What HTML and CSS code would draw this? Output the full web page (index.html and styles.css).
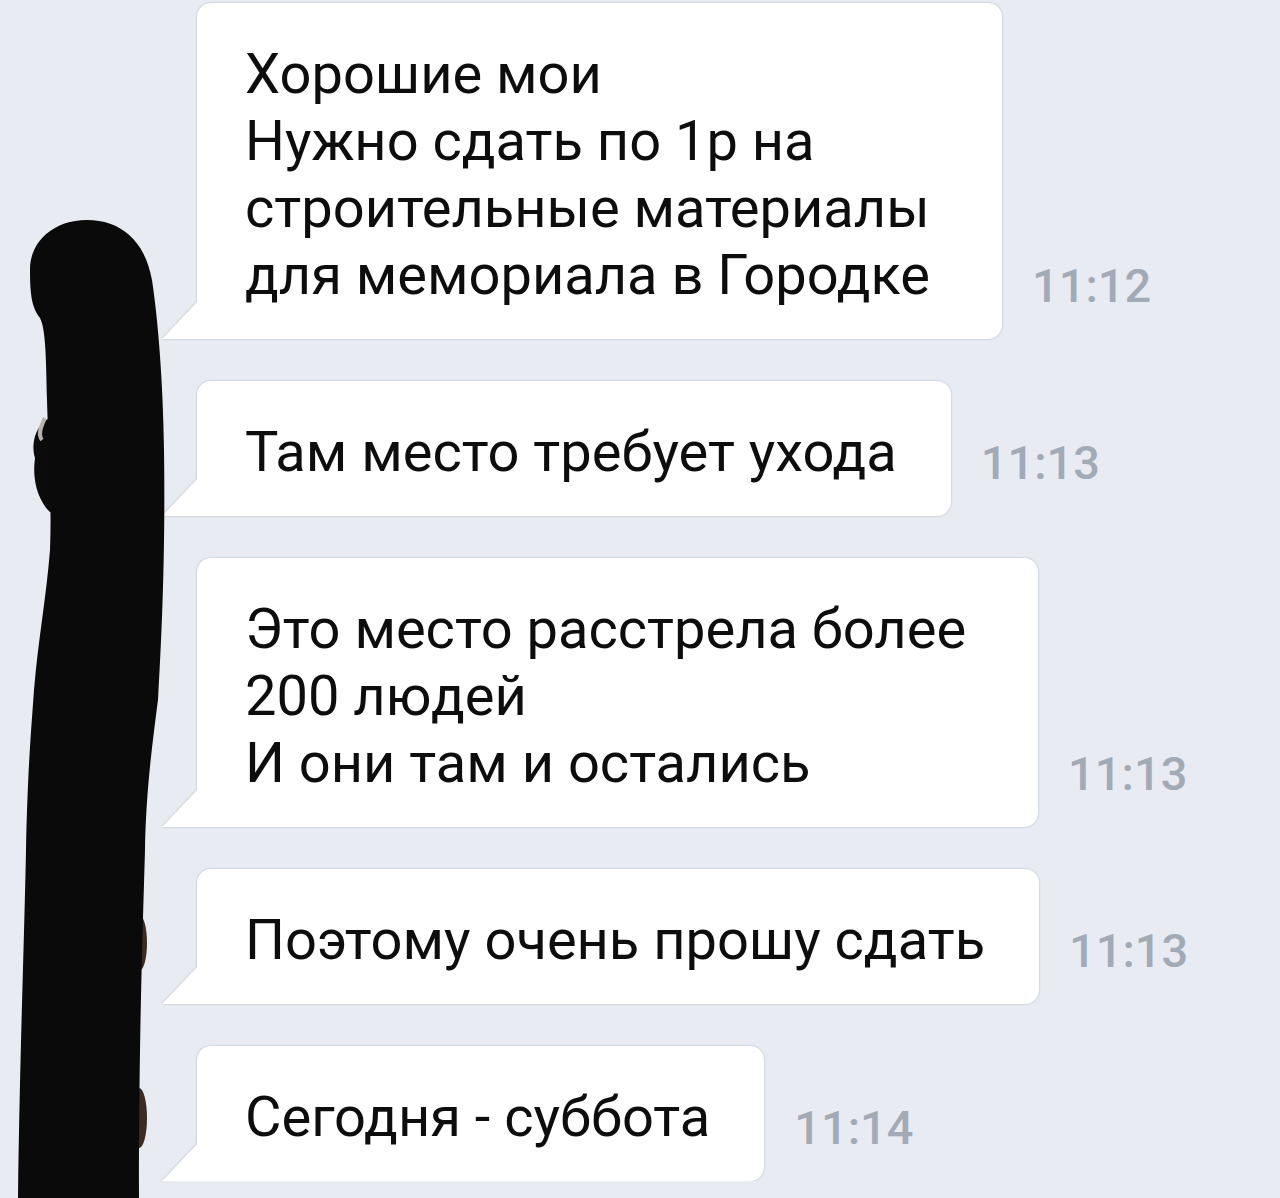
FILE: index.html
```html
<!DOCTYPE html>
<html lang="ru">
<head>
  <meta charset="UTF-8" />
  <title>Чат</title>
  <link rel="stylesheet" href="styles.css">
</head>
<body>
  <div class="chat">
    <div class="msg">
      <div class="bubble wide">Хорошие мои<br>Нужно сдать по 1р на<br>строительные материалы<br>для мемориала в Городке</div>
      <span class="time">11:12</span>
    </div>
    <div class="msg">
      <div class="bubble">Там место требует ухода</div>
      <span class="time">11:13</span>
    </div>
    <div class="msg">
      <div class="bubble wide">Это место расстрела более<br>200 людей<br>И они там и остались</div>
      <span class="time">11:13</span>
    </div>
    <div class="msg">
      <div class="bubble">Поэтому очень прошу сдать</div>
      <span class="time">11:13</span>
    </div>
    <div class="msg">
      <div class="bubble">Сегодня - суббота</div>
      <span class="time">11:14</span>
    </div>
  </div>

  <!-- закрашенная аватарка -->
  <svg class="scribble" width="200" height="1000" viewBox="0 200 200 1000">
    <ellipse cx="140" cy="943" rx="7" ry="27" fill="#3b2b22" />
    <ellipse cx="139" cy="1118" rx="8" ry="30" fill="#3b2b22" />
    <ellipse cx="135" cy="1150" rx="4" ry="10" fill="#f3c9d6" />
    <path d="M35 458 C30 440 38 422 52 417 L60 420 L60 510 L50 512 C38 500 32 480 35 458 Z" fill="#0b0b0b" />
    <path d="M45 418 C40 428 38 435 42 440" stroke="#b8b2ad" stroke-width="4" fill="none" />
    <path d="M87 220 C120 220 145 240 152 280 C158 320 163 380 164 450 C165 520 164 600 158 700 C150 760 146 800 145 850 C142 950 139 1050 139 1198 L18 1198 C20 1050 24 950 26 850 C28 760 32 720 34 690 C38 640 46 600 50 550 C52 500 48 440 47 400 C46 360 46 330 40 318 C32 308 30 295 30 270 C30 240 55 220 87 220 Z" fill="#0a0a0a" />
  </svg>
</body>
</html>
```

FILE: styles.css
```css
body {
  margin: 0;
  background-color: #e8ecf2;
  font-family: 'Roboto', 'Noto Sans', sans-serif;
  overflow: hidden;
}

.chat {
  display: flex;
  flex-direction: column;
  gap: 42px;
  padding-top: 3px;
}

.msg {
  display: flex;
  align-items: flex-end;
  padding-left: 197px;
}

.bubble {
  position: relative;
  background: white;
  color: #0d0d0d;
  font-size: 56px;
  line-height: 67px;
  padding: 38px 54px 30px 48px;
  border-radius: 14px;
  border-bottom-left-radius: 0;
  filter: drop-shadow(0 0 1px rgba(60, 80, 110, 0.35));
}

.bubble.wide {
  padding-right: 72px;
}

/* хвостик снизу слева */
.bubble::before {
  content: '';
  position: absolute;
  left: -35px;
  bottom: 0;
  width: 36px;
  height: 38px;
  background: white;
  clip-path: polygon(100% 0, 100% 100%, 0 100%);
}

.time {
  margin-left: 30px;
  margin-bottom: 30px;
  font-size: 47px;
  line-height: 1;
  font-weight: 500;
  color: #a2aab6;
}

.scribble {
  position: absolute;
  left: 0;
  top: 200px;
}
```
